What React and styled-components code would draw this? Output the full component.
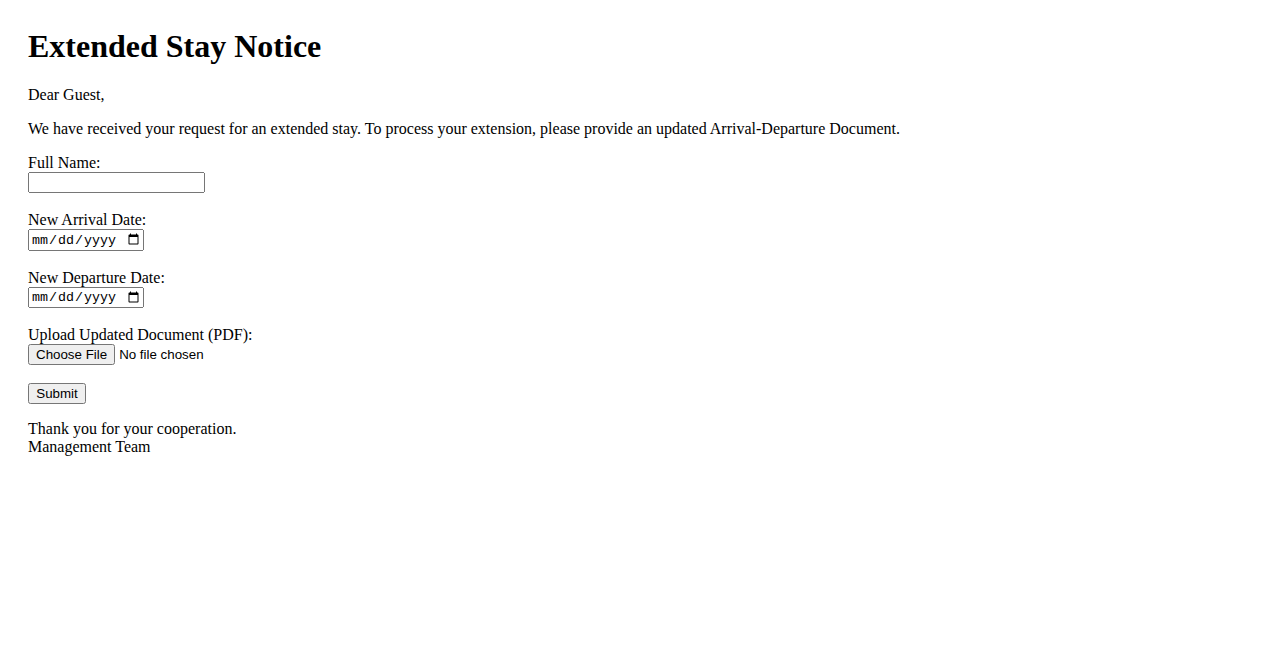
import React from "react";
import styled, { createGlobalStyle } from "styled-components";

const GlobalStyle = createGlobalStyle`
  body {
    margin: 8px;
    padding: 20px;
    background: #fff;
    color: #000;
    font-family: "Liberation Serif", "Times New Roman", serif;
    font-size: 16px;
  }
`;

const Heading = styled.h1`
  margin: 0 0 21.44px;
  font-size: 32px;
  font-weight: bold;
`;

const Paragraph = styled.p`
  margin: 16px 0;
`;

const Form = styled.form`
  margin: 0;
`;

const FieldLabel = styled.label`
  font-family: "Liberation Serif", "Times New Roman", serif;
`;

const TextField = styled.input`
  box-sizing: border-box;
  width: 177px;
  font-family: "Liberation Sans", Arial, sans-serif;
  font-size: 13.33px;
`;

const DateField = styled.input`
  box-sizing: border-box;
  width: 116px;
  font-family: "Liberation Mono", "DejaVu Sans Mono", monospace;
  font-size: 13.33px;
`;

const FileField = styled.input`
  font-family: "Liberation Sans", Arial, sans-serif;
  font-size: 13.33px;
`;

const SubmitButton = styled.button`
  box-sizing: border-box;
  width: 58px;
  font-family: "Liberation Sans", Arial, sans-serif;
  font-size: 13.33px;
`;

const App = () => {
  return (
    <>
      <GlobalStyle />
      <Heading>Extended Stay Notice</Heading>
      <Paragraph>Dear Guest,</Paragraph>
      <Paragraph>
        We have received your request for an extended stay. To process your
        extension, please provide an updated Arrival-Departure Document.
      </Paragraph>
      <Form onSubmit={(e) => e.preventDefault()}>
        <FieldLabel htmlFor="fullName">Full Name:</FieldLabel>
        <br />
        <TextField type="text" id="fullName" name="fullName" />
        <br />
        <br />
        <FieldLabel htmlFor="arrival">New Arrival Date:</FieldLabel>
        <br />
        <DateField type="date" id="arrival" name="arrival" />
        <br />
        <br />
        <FieldLabel htmlFor="departure">New Departure Date:</FieldLabel>
        <br />
        <DateField type="date" id="departure" name="departure" />
        <br />
        <br />
        <FieldLabel htmlFor="document">Upload Updated Document (PDF):</FieldLabel>
        <br />
        <FileField type="file" id="document" name="document" accept=".pdf" />
        <br />
        <br />
        <SubmitButton type="submit">Submit</SubmitButton>
      </Form>
      <Paragraph>
        Thank you for your cooperation.
        <br />
        Management Team
      </Paragraph>
    </>
  );
};

export default App;
